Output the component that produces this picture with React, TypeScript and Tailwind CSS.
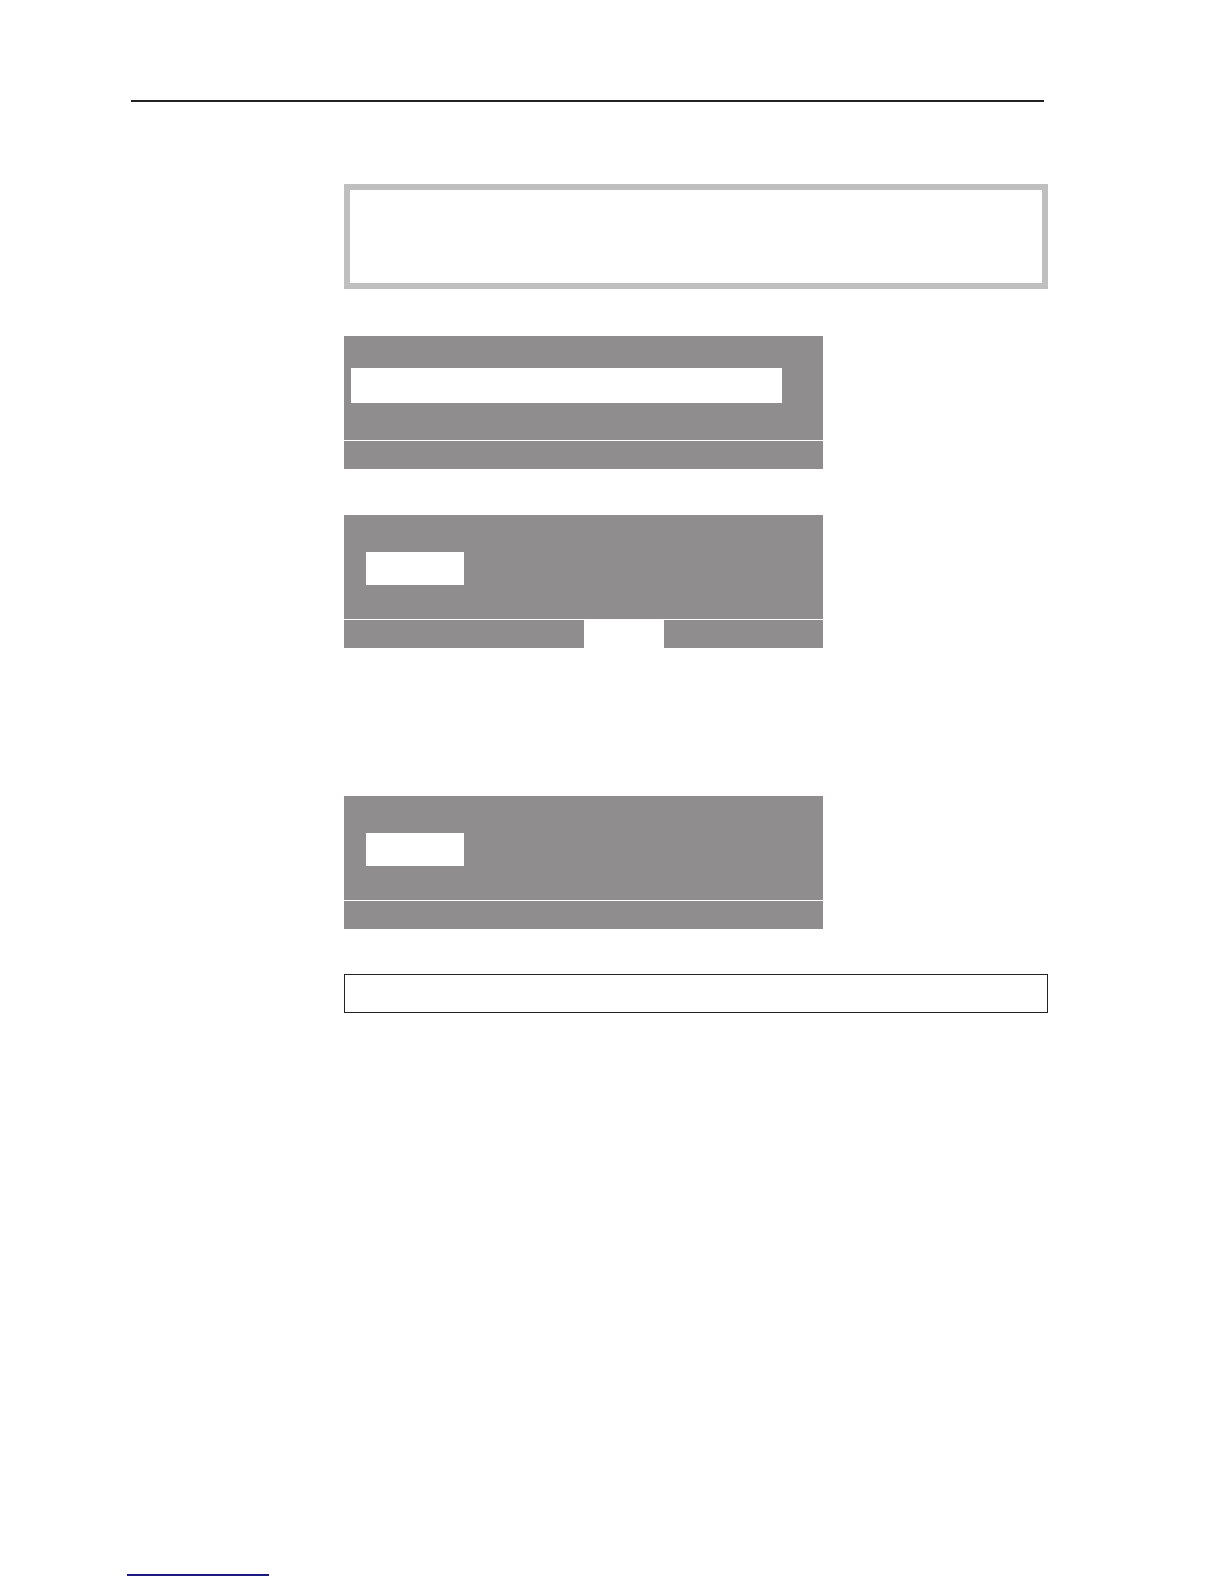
import React from "react";

// Grey display panel with a white divider line and a bottom strip
function Panel({
  children,
  tab = false,
}: {
  children?: React.ReactNode;
  tab?: boolean;
}) {
  return (
    <div className="w-[479px] bg-[#8f8d8e]">
      <div className="h-[104px] pt-[32px]">{children}</div>
      <div className="h-px bg-white" />
      <div className="flex h-[28px]">
        {tab && (
          <>
            <div className="w-[240px]" />
            <div className="w-[80px] bg-white" />
          </>
        )}
      </div>
    </div>
  );
}

export default function App() {
  return (
    <div className="w-[1224px] h-[1584px] bg-white overflow-hidden">
      {/* header rule */}
      <div className="pt-[100px] pl-[131px]">
        <div className="w-[913px] h-[2px] bg-[#222]" />
      </div>

      <div className="ml-[344px] w-[704px]">
        {/* note box */}
        <div className="mt-[82px] h-[105px] border-[6px] border-[#bfbfbf] bg-white" />

        {/* display 1 */}
        <div className="mt-[47px]">
          <Panel>
            <div className="ml-[7px] w-[431px] h-[35px] bg-white" />
          </Panel>
        </div>

        {/* display 2 */}
        <div className="mt-[46px]">
          <Panel tab>
            <div className="mt-[5px] ml-[22px] w-[98px] h-[33px] bg-white" />
          </Panel>
        </div>

        {/* display 3 */}
        <div className="mt-[148px]">
          <Panel>
            <div className="mt-[5px] ml-[22px] w-[98px] h-[33px] bg-white" />
          </Panel>
        </div>

        {/* outlined box */}
        <div className="mt-[45px] h-[39px] border-[1.5px] border-[#222] bg-white" />
      </div>

      {/* footer link underline */}
      <div className="mt-[561px] ml-[127px] w-[142px] h-[2px] bg-[#1a1a80]" />
    </div>
  );
}
